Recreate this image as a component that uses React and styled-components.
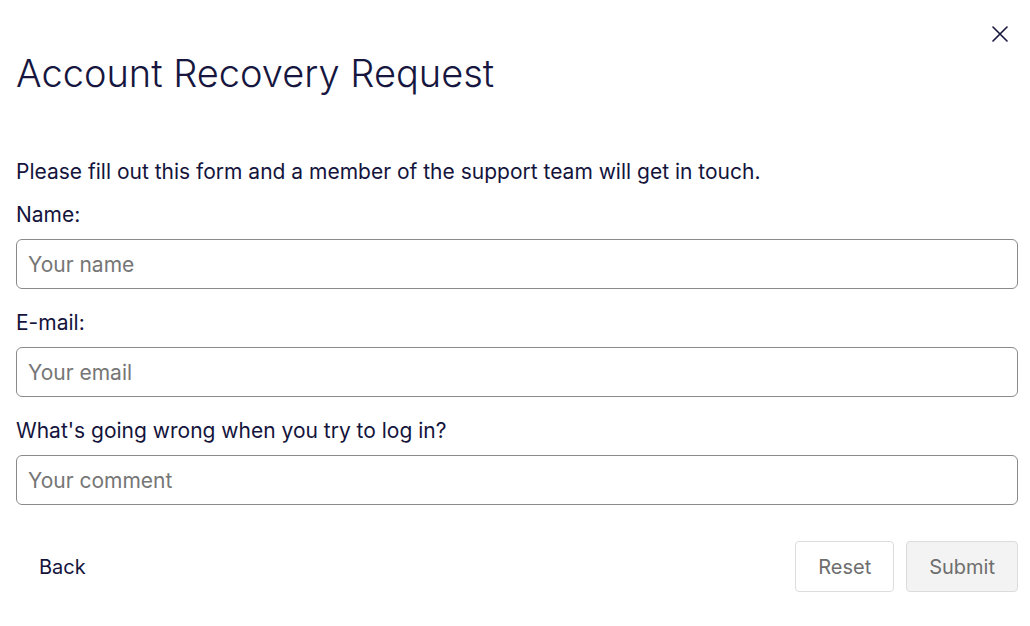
import React from 'react'
import styled, { createGlobalStyle } from 'styled-components'

const Global = createGlobalStyle`
  body {
    margin: 0;
    background: #fff;
    font-family: Inter, "Noto Sans", sans-serif;
    color: #14143c;
  }
`

const Dialog = styled.div`
  position: relative;
  padding: 46px 12px 0 16px;
`

const Close = styled.button`
  position: absolute;
  top: 23px;
  right: 19px;
  width: 22px;
  height: 22px;
  padding: 0;
  border: none;
  background: none;
  cursor: pointer;
  display: flex;
  align-items: center;
  justify-content: center;
`

const Title = styled.h1`
  margin: 0;
  font-size: 38px;
  font-weight: 300;
  line-height: 54px;
  color: #16163f;
`

const Intro = styled.p`
  margin: 57px 0 0;
  font-size: 21px;
  line-height: 30px;
`

const Field = styled.label`
  display: flex;
  flex-direction: column;
  gap: 9px;
  margin-top: ${p => p.$first ? 13 : 19}px;
  font-size: 21px;
  line-height: 30px;
`

const Input = styled.input`
  height: 50px;
  box-sizing: border-box;
  border: 1px solid #8a8a8a;
  border-radius: 6px;
  padding: 0 11px;
  font-family: Inter, sans-serif;
  font-size: 21px;
  color: #14143c;
  &::placeholder { color: #767676; }
`

const Footer = styled.div`
  display: flex;
  align-items: center;
  justify-content: space-between;
  margin-top: 36px;
`

const Actions = styled.div`
  display: flex;
  gap: 12px;
`

const Button = styled.button`
  height: 51px;
  box-sizing: border-box;
  padding: 0 22px;
  border-radius: 4px;
  border: 1px solid ${p => p.$ghost ? 'transparent' : '#dcdcdc'};
  background: ${p => p.$filled ? '#f3f3f3' : '#fff'};
  color: ${p => p.$ghost ? '#14143c' : '#6e6e6e'};
  font-family: Inter, sans-serif;
  font-size: 20px;
  cursor: pointer;
`

export default function App() {
  return (
    <Dialog>
      <Global />
      <Close aria-label="Close">
        <svg width="16" height="16" viewBox="0 0 16 16" stroke="#14143c" strokeWidth="1.6" strokeLinecap="round">
          <path d="M1 1l14 14M15 1L1 15" />
        </svg>
      </Close>
      <Title>Account Recovery Request</Title>
      <Intro>Please fill out this form and a member of the support team will get in touch.</Intro>
      <Field $first>
        Name:
        <Input placeholder="Your name" />
      </Field>
      <Field>
        E-mail:
        <Input placeholder="Your email" />
      </Field>
      <Field>
        What's going wrong when you try to log in?
        <Input placeholder="Your comment" />
      </Field>
      <Footer>
        <Button $ghost>Back</Button>
        <Actions>
          <Button>Reset</Button>
          <Button $filled>Submit</Button>
        </Actions>
      </Footer>
    </Dialog>
  )
}
